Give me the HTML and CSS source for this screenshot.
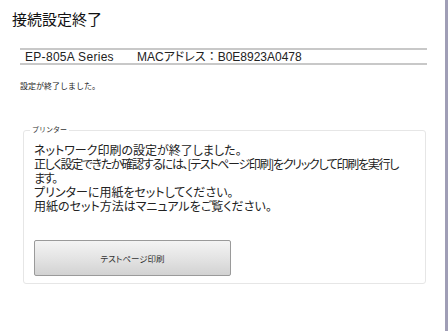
FILE: index.html
```html
<!DOCTYPE html>
<html lang="ja">
<head>
    <meta charset="UTF-8">
    <title>接続設定終了</title>
    <link rel="stylesheet" href="styles.css">
</head>
<body>
    <div class="window">
        <h1 class="title">接続設定終了</h1>
        <div class="info-bar">
            <span class="model">EP-805A Series</span>
            <span class="mac">MAC<span class="kana">アドレス</span>：B0E8923A0478</span>
        </div>
        <p class="status">設定が終了しました。</p>
        <div class="group">
            <span class="group-label">プリンター</span>
            <div class="group-body">
                <p class="message">ネットワーク印刷の設定が終了しました。<br><span class="long">正しく設定できたか確認するには、[テストページ印刷]をクリックして印刷を実行し<br>ます。</span><br>プリンターに用紙をセットしてください。<br>用紙のセット方法はマニュアルをご覧ください。</p>
                <button class="test-button">テストページ印刷</button>
            </div>
        </div>
    </div>
</body>
</html>
```

FILE: styles.css
```css
html, body {
    margin: 0;
    background-color: #ffffff;
}
body {
    font-family: "Noto Sans CJK JP", "Liberation Sans", sans-serif;
    color: #222;
}
.window {
    height: 331px;
    width: 448px;
    border-right: 3px solid #a09eb6;
    box-sizing: border-box;
    padding-top: 10px;
}
.title {
    margin: 0 0 0 12px;
    font-size: 15px;
    font-weight: normal;
    line-height: 18px;
    color: #111;
}
.info-bar {
    margin: 20px 18px 0 20px;
    border-top: 2px solid #c8c8c8;
    border-bottom: 2px solid #c8c8c8;
    height: 12px;
    padding: 1px 0 0 5px;
    font-family: "Liberation Sans", "Noto Sans CJK JP", sans-serif;
    font-size: 12px;
    line-height: 12px;
    letter-spacing: 0.3px;
    display: flex;
    gap: 23px;
}
.mac {
    letter-spacing: 0;
}
.kana {
    font-feature-settings: "palt";
}
.status {
    margin: 16px 0 0 20px;
    font-size: 8px;
    line-height: 10px;
}
.group {
    position: relative;
    margin: 39px 19px 0 23px;
    border: 1px solid #e6e6e6;
    border-radius: 3px;
    height: 152px;
}
.group-label {
    position: absolute;
    left: 6px;
    top: -7px;
    padding: 0 2px;
    background-color: #fff;
    font-size: 7px;
    line-height: 10px;
    color: #333;
}
.group-body {
    padding: 12px 10px 0 10px;
}
.message {
    margin: 0;
    font-size: 12px;
    line-height: 14px;
    font-feature-settings: "palt";
    color: #222;
    white-space: nowrap;
}
.long {
    letter-spacing: -1.3px;
}
.test-button {
    margin-top: 27px;
    width: 197px;
    height: 36px;
    border: 1px solid #9a9a9a;
    border-radius: 2px;
    background: linear-gradient(#f4f4f4, #e4e4e4 50%, #d2d2d2);
    font-family: "Noto Sans CJK JP", sans-serif;
    font-size: 8.5px;
    color: #333;
    font-feature-settings: "palt";
}
```
